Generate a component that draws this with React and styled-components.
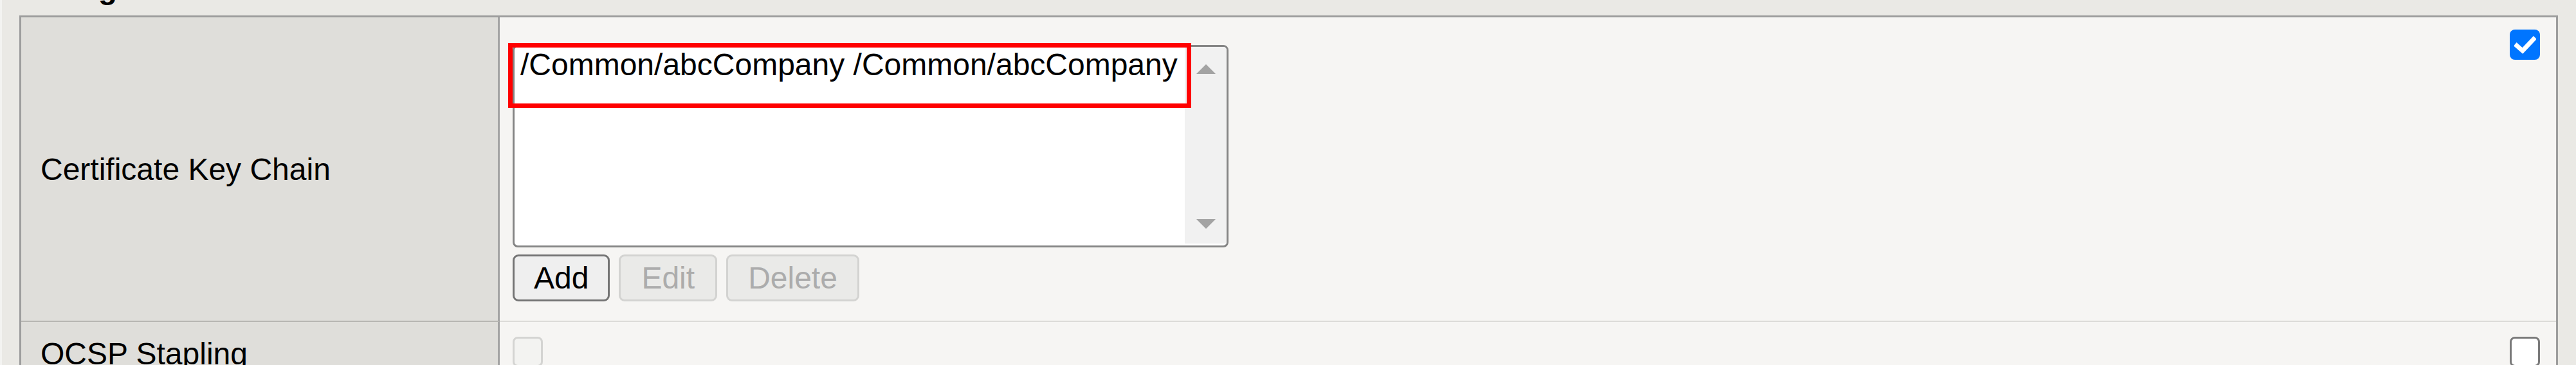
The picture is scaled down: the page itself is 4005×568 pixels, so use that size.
import React from "react";
import styled, { createGlobalStyle } from "styled-components";

const Global = createGlobalStyle`
  html, body { margin: 0; padding: 0; background: #eae9e5; overflow: hidden; }
  body { font-family: "Liberation Sans", Arial, sans-serif; font-size: 48px; color: #000; }
`;

const Page = styled.div`
  width: 4005px;
  height: 568px;
  box-sizing: border-box;
  padding: 0 28px 0 27px;
  border-left: 3px solid #f3f3f1;
  overflow: hidden;
`;

const Heading = styled.h2`
  margin: -46px 0 15px 0;
  padding-left: 0;
  font-size: 48px;
  line-height: 55px;
  font-weight: bold;
`;

const Table = styled.div`
  display: grid;
  grid-template-columns: 744px 1fr 72px;
  border: 3px solid #9d9d9d;
  border-bottom: none;
  background: #f6f5f3;
`;

const Label = styled.div`
  background: #dfdeda;
  border-right: 3px solid #a3a3a3;
  border-bottom: ${(p) => (p.$last ? "none" : "2px solid #b7b6b2")};
  display: flex;
  align-items: ${(p) => (p.$top ? "flex-start" : "center")};
  padding: ${(p) => (p.$top ? `${p.$top}px` : "0")} 0 0 30px;
  line-height: 55px;
`;

const Value = styled.div`
  border-bottom: ${(p) => (p.$last ? "none" : "2px solid #dcdbd8")};
  padding: ${(p) => p.$pt}px 0 ${(p) => p.$pb}px 20px;
`;

const Custom = styled.div`
  border-bottom: ${(p) => (p.$last ? "none" : "2px solid #dcdbd8")};
  padding-top: ${(p) => p.$pt}px;
  display: flex;
  justify-content: flex-start;
  align-items: flex-start;
`;

const ListWrap = styled.div`
  position: relative;
  width: 1113px;
`;

const ListBox = styled.div`
  box-sizing: border-box;
  width: 1113px;
  height: 315px;
  border: 3px solid #858585;
  border-radius: 8px;
  background: #fff;
  display: flex;
  overflow: hidden;
`;

const Options = styled.div`
  flex: 1;
  padding: 0 0 0 9px;
`;

const Option = styled.div`
  line-height: 55px;
  white-space: nowrap;
`;

const ScrollBar = styled.div`
  width: 65px;
  height: 306px;
  background: #f1f1f1;
  display: flex;
  flex-direction: column;
  justify-content: space-between;
  align-items: center;
  padding: 27px 0 23px;
  box-sizing: border-box;
`;

const Highlight = styled.div`
  position: absolute;
  left: -7px;
  top: -3px;
  width: 1062px;
  height: 101px;
  box-sizing: border-box;
  border: 7px solid #ff0000;
  pointer-events: none;
`;

const ButtonRow = styled.div`
  display: flex;
  gap: 14px;
  margin-top: 11px;
`;

const Button = styled.button`
  font-family: "Liberation Sans", Arial, sans-serif;
  font-size: 48px;
  line-height: 55px;
  height: 73px;
  box-sizing: border-box;
  padding: 0 ${(p) => p.$px || 30}px;
  border-radius: 9px;
  border: 3px solid ${(p) => (p.disabled ? "#d3d3d1" : "#747474")};
  background: ${(p) => (p.disabled ? "#eaeae8" : "#efefef")};
  color: ${(p) => (p.disabled ? "#acacac" : "#000")};
`;

const Box = styled.div`
  box-sizing: border-box;
  width: 47px;
  height: 47px;
  border-radius: 8px;
  border: ${(p) =>
    p.$checked ? "none" : p.$disabled ? "3px solid #d4d4d2" : "3px solid #7a7a7a"};
  background: ${(p) => (p.$checked ? "#0075ff" : p.$disabled ? "#f3f3f1" : "#fff")};
  display: flex;
  align-items: center;
  justify-content: center;
`;

const Arrow = ({ down }) => (
  <svg width="30" height="15" viewBox="0 0 30 15">
    <polygon points={down ? "0,0 30,0 15,15" : "15,0 30,15 0,15"} fill="#a3a3a3" />
  </svg>
);

const Check = ({ checked, disabled }) => (
  <Box $checked={checked} $disabled={disabled}>
    {checked && (
      <svg width="34" height="30" viewBox="0 0 34 30">
        <path d="M4 16 L13 24 L30 6" fill="none" stroke="#fff" strokeWidth="7" strokeLinecap="square" />
      </svg>
    )}
  </Box>
);

export default function App() {
  return (
    <>
      <Global />
      <Page>
        <Heading>Configuration</Heading>
        <Table>
          <Label>Certificate Key Chain</Label>
          <Value $pt={43} $pb={30}>
            <ListWrap>
              <ListBox>
                <Options>
                  <Option>/Common/abcCompany /Common/abcCompany</Option>
                </Options>
                <ScrollBar>
                  <Arrow />
                  <Arrow down />
                </ScrollBar>
              </ListBox>
              <Highlight />
            </ListWrap>
            <ButtonRow>
              <Button $px={30}>Add</Button>
              <Button disabled $px={32}>Edit</Button>
              <Button disabled $px={31}>Delete</Button>
            </ButtonRow>
          </Value>
          <Custom $pt={19}>
            <Check checked />
          </Custom>
          <Label $last $top={22}>OCSP Stapling</Label>
          <Value $last $pt={23} $pb={30}>
            <Check disabled />
          </Value>
          <Custom $last $pt={23}>
            <Check />
          </Custom>
        </Table>
      </Page>
    </>
  );
}
